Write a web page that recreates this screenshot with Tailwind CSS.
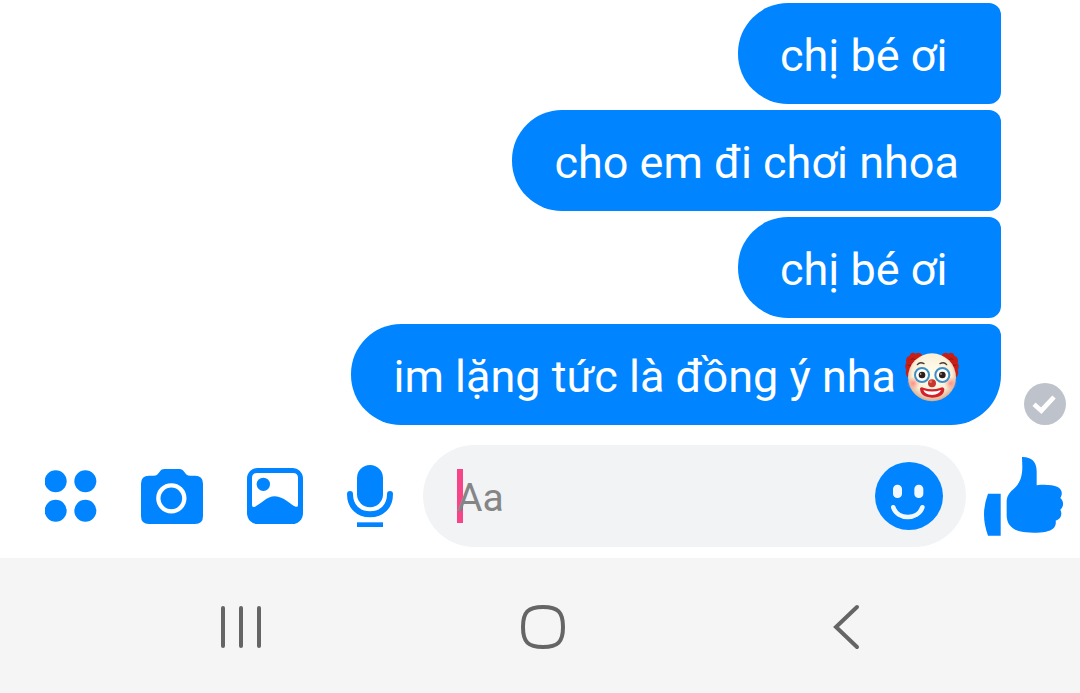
<!DOCTYPE html>
<html lang="vi">
<head>
  <meta charset="UTF-8">
  <meta name="viewport" content="width=device-width, initial-scale=1.0">
  <title>Chat</title>
  <script src="https://cdn.jsdelivr.net/npm/@tailwindcss/browser@4"></script>
</head>
<body class="flex min-h-screen flex-col bg-white font-[Roboto,sans-serif]">

  <!-- Messages -->
  <main class="flex items-end gap-[23px] pt-[3px] pr-[14px]">
    <ul class="flex flex-1 flex-col items-end gap-1.5 text-[45px] leading-[53px] text-white">
      <li class="min-w-[263px] rounded-l-[50px] rounded-r-xl bg-[#0084ff] px-[42px] pt-[26px] pb-[22px]">chị bé ơi</li>
      <li class="min-w-[263px] rounded-l-[50px] rounded-r-xl bg-[#0084ff] px-[42px] pt-[26px] pb-[22px]">cho em đi chơi nhoa</li>
      <li class="min-w-[263px] rounded-l-[50px] rounded-r-xl bg-[#0084ff] px-[42px] pt-[26px] pb-[22px]">chị bé ơi</li>
      <li class="flex items-center gap-[9px] rounded-[50px] rounded-tr-xl bg-[#0084ff] px-[42px] pt-[26px] pb-[22px]">
        <span>im lặng tức là đồng ý nha</span>
        <svg class="h-[52px] w-[54px]" viewBox="0 0 162 156" role="img" aria-label="clown">
          <defs>
            <radialGradient id="face" cx="50%" cy="42%" r="58%">
              <stop offset="0" stop-color="#fffdf0"/>
              <stop offset=".7" stop-color="#fbf0d8"/>
              <stop offset="1" stop-color="#d9aa8c"/>
            </radialGradient>
            <radialGradient id="cheek">
              <stop offset="0" stop-color="#ff8078" stop-opacity=".85"/>
              <stop offset="1" stop-color="#ff9a8c" stop-opacity="0"/>
            </radialGradient>
          </defs>
          <path fill="#c71f18" d="M53 16C49 5 38 3 33 8C25 2 15 5 14 14C5 16 1 26 4 35C-1 42 0 51 4 56C0 64 3 74 10 81L25 74L50 34ZM109 16C113 5 124 3 129 8C137 2 147 5 148 14C157 16 161 26 158 35C163 42 162 51 158 56C162 64 159 74 152 81L137 74L112 34Z"/>
          <path fill="none" stroke="#8e1512" stroke-width="3" d="M17 25q8-5 14 2M8 43q8-4 12 4M145 25q-8-5-14 2M154 43q-8-4-12 4"/>
          <ellipse cx="81" cy="79" rx="72" ry="72" fill="url(#face)"/>
          <circle cx="25" cy="97" r="20" fill="url(#cheek)"/>
          <circle cx="137" cy="97" r="20" fill="url(#cheek)"/>
          <path fill="none" stroke="#4a3a34" stroke-width="4" stroke-linecap="round" d="M37 41Q45 31 57 38M105 38Q117 31 125 41"/>
          <circle cx="51" cy="72" r="21" fill="#fff" stroke="#3e8fc4" stroke-width="6"/>
          <circle cx="112" cy="72" r="21" fill="#fff" stroke="#3e8fc4" stroke-width="6"/>
          <circle cx="51" cy="72" r="10" fill="#2e1c18"/>
          <circle cx="112" cy="72" r="10" fill="#2e1c18"/>
          <circle cx="47" cy="69" r="2" fill="#fff"/>
          <circle cx="108" cy="69" r="2" fill="#fff"/>
          <path fill="#d3202a" d="M45 112Q49 106 57 111Q81 119 105 111Q114 105 118 113Q118 139 81 140Q45 138 45 112Z"/>
          <path fill="#fff" d="M55 117Q81 126 108 117Q103 131 81 132Q59 130 55 117Z"/>
          <circle cx="81" cy="97" r="12" fill="#c7372b"/>
          <circle cx="77" cy="92" r="4" fill="#e8786a"/>
        </svg>
      </li>
    </ul>
    <svg class="size-[42px]" viewBox="0 0 126 126" role="img" aria-label="Sent">
      <circle cx="63" cy="63" r="63" fill="#bec2cb"/>
      <path fill="none" stroke="#fff" stroke-width="14" d="M30 64L52 83L90 42"/>
    </svg>
  </main>

  <!-- Composer -->
  <form class="flex items-center pt-5 pr-4 pb-[11px] pl-[45px] text-[#0084ff]">
    <div class="flex items-center gap-11">
      <button type="button" aria-label="More">
        <svg class="size-[52px]" viewBox="45 62 156 156" fill="currentColor">
          <circle cx="77" cy="96" r="33"/>
          <circle cx="166" cy="96" r="33"/>
          <circle cx="77" cy="184" r="33"/>
          <circle cx="166" cy="184" r="33"/>
        </svg>
      </button>
      <button type="button" aria-label="Camera">
        <svg class="h-14 w-[62px]" viewBox="333 54 186 168" fill="currentColor">
          <path d="M357 77H371C380 77 384 72 389 65C393 59 397 57 404 57H448C455 57 459 60 463 66C468 73 471 77 481 77H495Q519 77 519 101V198Q519 222 495 222H357Q333 222 333 198V101Q333 77 357 77Z"/>
          <circle cx="424" cy="145" r="39" fill="none" stroke="#fff" stroke-width="13"/>
        </svg>
      </button>
      <button type="button" aria-label="Gallery">
        <svg class="size-14" viewBox="54 54 168 168" fill="currentColor">
          <rect x="54" y="54" width="168" height="168" rx="32"/>
          <path fill="#fff" d="M84 69H192Q207 69 207 84V166Q207 172 200 170C184 165 164 139 138 139C112 139 97 162 78 170Q69 173 69 165V84Q69 69 84 69Z"/>
          <circle cx="103" cy="103" r="20"/>
        </svg>
      </button>
      <button type="button" aria-label="Voice message">
        <svg class="h-[62px] w-[46px]" viewBox="348 45 138 186" fill="currentColor">
          <rect x="378" y="45" width="78" height="127" rx="39"/>
          <path fill="none" stroke="currentColor" stroke-width="18" stroke-linecap="round" d="M357 132C357 170 382 193 417 193C452 193 477 170 477 132"/>
          <path d="M378 217H456V231H378Z"/>
        </svg>
      </button>
    </div>

    <div class="relative mr-[18px] ml-[30px] flex h-[102px] min-w-0 flex-1 items-center rounded-full bg-[#f1f3f5] pr-[23px] pl-[34px]">
      <span class="absolute left-[34px] h-[54px] w-1.5 bg-[#f7458a]"></span>
      <input type="text" aria-label="Message" placeholder="Aa" class="relative h-[60px] min-w-0 flex-1 bg-transparent pt-1 text-[39px] text-gray-800 outline-none placeholder:text-[#858585]">
      <button type="button" aria-label="Emoji">
        <svg class="size-[68px]" viewBox="45 81 204 204">
          <circle cx="147" cy="183" r="102" fill="currentColor"/>
          <rect x="99" y="149" width="27" height="40" rx="13" fill="#f1f9ff"/>
          <rect x="163" y="149" width="27" height="40" rx="13" fill="#f1f9ff"/>
          <path fill="none" stroke="#f1f9ff" stroke-width="14" stroke-linecap="round" d="M100 217C112 255 174 256 187 217"/>
        </svg>
      </button>
    </div>

    <button type="button" aria-label="Like">
      <svg class="size-20" viewBox="372 63 240 240" fill="currentColor">
        <path d="M384 176H422V302H384Q372 270 372 238Q372 208 384 176Z"/>
        <path d="M486 66C513 65 530 80 530 108V151C553 148 579 150 593 156C606 162 609 177 601 189C612 199 612 215 601 224C608 238 603 252 587 257C590 275 579 286 558 290C532 295 498 294 476 288C451 281 440 263 440 241V202C440 184 447 174 460 163C480 146 487 124 487 95Z"/>
      </svg>
    </button>
  </form>

  <!-- System navigation -->
  <nav class="grid flex-1 grid-cols-3 place-items-center bg-[#f5f5f5] pt-[3px] pr-[84px] pl-[90px] text-[#656565]">
    <button type="button" aria-label="Recent apps">
      <svg class="h-11 w-[42px]" viewBox="0 0 42 44" fill="none" stroke="currentColor" stroke-width="4" stroke-linecap="round">
        <path d="M3 3V41M21 3V41M39 3V41"/>
      </svg>
    </button>
    <button type="button" aria-label="Home">
      <svg class="size-11" viewBox="0 0 44 44" fill="none" stroke="currentColor" stroke-width="4">
        <path d="M22 2C37 2 42 7 42 22C42 37 37 42 22 42C7 42 2 37 2 22C2 7 7 2 22 2Z"/>
      </svg>
    </button>
    <button type="button" aria-label="Back">
      <svg class="h-[46px] w-[30px]" viewBox="0 0 30 46" fill="none" stroke="currentColor" stroke-width="4" stroke-linecap="round">
        <path d="M27 3L6 23L27 43"/>
      </svg>
    </button>
  </nav>

</body>
</html>
